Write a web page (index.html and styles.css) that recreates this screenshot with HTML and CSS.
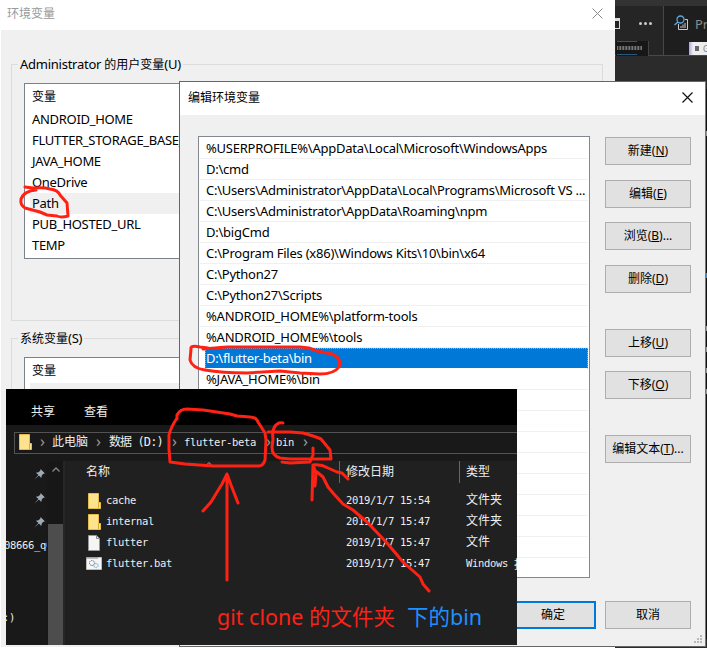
FILE: index.html
```html
<!DOCTYPE html>
<html lang="zh-CN">
<head>
<meta charset="utf-8">
<title>环境变量</title>
<link rel="stylesheet" href="styles.css">
</head>
<body>
<main class="desktop">
  <section class="editor">
    <div class="editor-top"></div>
    <div class="editor-tabs">
      <div class="tab-left"><i class="pane-icon"></i><span class="dots"><i></i><i></i><i></i></span></div>
      <div class="tab-right">
        <svg width="15" height="16" viewBox="0 0 15 16" fill="none"><path d="M4.500 9V14.500H13.500V4.500H11" stroke="#ccc"/><path d="M7 13V11M9 13V9.500M11 13V8" stroke="#ccc"/><circle cx="6.500" cy="4.500" r="3.500" stroke="#5ba7df" stroke-width="1.300"/><path d="M4 7L.5 10" stroke="#5ba7df" stroke-width="1.500"/></svg>
        <span>Pr</span>
      </div>
    </div>
    <div class="thumb-code"><i></i><i></i><i></i></div>
    <div class="thumb-page"><i></i><span>G</span></div>
    <div class="edge"><i></i><i></i><i></i><i></i><i></i><i></i></div>
  </section>

  <section class="win vars">
    <header class="bar"><span>环境变量</span><svg width="11" height="11" viewBox="0 0 11 11"><path d="M.5.5l10 10M10.500.5l-10 10" stroke="#888"/></svg></header>
    <div class="group">
      <span class="legend">Administrator <small>的用户变量</small>(U)</span>
      <div class="list">
        <div class="head">变量</div>
        <div>ANDROID_HOME</div><div>FLUTTER_STORAGE_BASE_URL</div><div>JAVA_HOME</div><div>OneDrive</div><div class="on">Path</div><div>PUB_HOSTED_URL</div><div>TEMP</div>
      </div>
    </div>
    <div class="group second">
      <span class="legend"><small>系统变量</small>(S)</span>
      <div class="list"><div class="head">变量</div><div class="on"></div></div>
    </div>
  </section>

  <section class="win edit">
    <header class="bar"><span>编辑环境变量</span><svg width="11" height="11" viewBox="0 0 11 11"><path d="M.5.5l10 10M10.500.5l-10 10" stroke="#111" stroke-width="1.200"/></svg></header>
    <div class="body">
      <div class="paths">
        <div>%USERPROFILE%\AppData\Local\Microsoft\WindowsApps</div>
        <div>D:\cmd</div>
        <div>C:\Users\Administrator\AppData\Local\Programs\Microsoft VS ...</div>
        <div>C:\Users\Administrator\AppData\Roaming\npm</div>
        <div>D:\bigCmd</div>
        <div>C:\Program Files (x86)\Windows Kits\10\bin\x64</div>
        <div>C:\Python27</div>
        <div>C:\Python27\Scripts</div>
        <div>%ANDROID_HOME%\platform-tools</div>
        <div>%ANDROID_HOME%\tools</div>
        <div class="sel">D:\flutter-beta\bin</div>
        <div>%JAVA_HOME%\bin</div>
        <div></div><div></div><div></div><div></div><div></div><div></div><div></div><div></div>
      </div>
      <div class="buttons">
        <button>新建(<u>N</u>)</button>
        <button class="g15">编辑(<u>E</u>)</button>
        <button class="g14">浏览(<u>B</u>)...</button>
        <button class="g15">删除(<u>D</u>)</button>
        <button class="g36">上移(<u>U</u>)</button>
        <button class="g14">下移(<u>O</u>)</button>
        <button class="g36">编辑文本(<u>T</u>)...</button>
      </div>
    </div>
    <footer><button class="ok">确定</button><button>取消</button></footer>
    <svg class="grip" width="9" height="9" viewBox="0 0 9 9" fill="#b8b8b8"><path d="M6 0h2v2h-2zM3 3h2v2h-2zM6 3h2v2h-2zM0 6h2v2h-2zM3 6h2v2h-2zM6 6h2v2h-2z"/></svg>
  </section>

  <section class="explorer">
    <nav class="menu"><span>共享</span><span>查看</span></nav>
    <div class="address"><div class="crumbs">
      <svg class="folder" width="14" height="16" viewBox="0 0 14 16"><path d="M.5.5h10v9h2v6H.5z" fill="#ffe28e" stroke="#e7bd49"/><path d="M10.500 10v5" stroke="#d9a936"/></svg>
      <b class="c1">›</b><span class="c2">此电脑</span><b class="c3">›</b><span class="c4">数据 (D:)</span><b class="c5">›</b><span class="c6">flutter-beta</span><b class="c7">›</b><span class="c8">bin</span><b class="c9">›</b>
    </div></div>
    <div class="panes">
      <aside class="side">
        <svg class="pin" viewBox="0 0 10 10"><path d="M6 0l4 4-1.500.3L7 6l-.4 2.200L4.500 6 .5 9.500 4 5.500 1.800 3.400 4 3l1.700-1.500z" fill="#9eaab5"/></svg>
        <svg class="pin" viewBox="0 0 10 10"><path d="M6 0l4 4-1.500.3L7 6l-.4 2.200L4.500 6 .5 9.500 4 5.500 1.800 3.400 4 3l1.700-1.500z" fill="#9eaab5"/></svg>
        <svg class="pin" viewBox="0 0 10 10"><path d="M6 0l4 4-1.500.3L7 6l-.4 2.200L4.500 6 .5 9.500 4 5.500 1.800 3.400 4 3l1.700-1.500z" fill="#9eaab5"/></svg>
        <span class="qq">08666_q0</span><span class="drv">:)</span>
      </aside>
      <div class="scroll"><svg width="8" height="5" viewBox="0 0 8 5" fill="none"><path d="M.5 4.500L4 1l3.500 3.500" stroke="#888" stroke-width="1.300"/></svg><i></i></div>
      <div class="files">
        <svg class="sort" width="6" height="4" viewBox="0 0 6 4" fill="none"><path d="M0 3.500L3 .5l3 3" stroke="#aaa"/></svg>
        <div class="row hd"><span>名称</span><span>修改日期</span><span>类型</span></div>
        <div class="row"><span><svg width="14" height="16" viewBox="0 0 14 16"><path d="M.5.5h10v9h2v6H.5z" fill="#ffe28e" stroke="#e7bd49"/><path d="M10.500 10v5" stroke="#d9a936"/></svg>cache</span><span>2019/1/7 15:54</span><span class="cj">文件夹</span></div>
        <div class="row"><span><svg width="14" height="16" viewBox="0 0 14 16"><path d="M.5.5h10v9h2v6H.5z" fill="#ffe28e" stroke="#e7bd49"/><path d="M10.500 10v5" stroke="#d9a936"/></svg>internal</span><span>2019/1/7 15:47</span><span class="cj">文件夹</span></div>
        <div class="row"><span><svg width="14" height="16" viewBox="0 0 14 16"><path d="M.5.500h8l3 3v12H.5z" fill="#f5f5f5" stroke="#999"/><path d="M8.500.5v3h3" fill="none" stroke="#888"/></svg>flutter</span><span>2019/1/7 15:47</span><span class="cj">文件</span></div>
        <div class="row"><span><svg class="bat" width="16" height="13" viewBox="0 0 16 13"><path d="M.5.5h15v12H.5z" fill="#f4f6f7" stroke="#bbb"/><path d="M0 1h12" stroke="#888"/><circle cx="6" cy="6" r="2.500" fill="none" stroke="#777" stroke-dasharray="1.500 .6"/><circle cx="10" cy="8.500" r="2.200" fill="#e2f2fa" stroke="#76a8c1" stroke-dasharray="1.500 .6"/></svg>flutter.bat</span><span>2019/1/7 15:47</span><span>Windows <em>批</em></span></div>
        <p class="note"><span class="red">git clone 的文件夹</span><span class="blue">下的bin</span></p>
      </div>
    </div>
  </section>

  <svg class="ink" width="707" height="648" viewBox="0 0 707 648">
    <path d="M25 187L33 188Q44 187 50 189Q58 190 60 195L67 203L68 216Q61 218 57 216L47 215L40 212L25 208Q20 205 21 199Q24 191 36 190"/>
    <path d="M208 348L200 347Q190 345 191 349L190 360Q192 368 205 370Q222 373 247 373L280 371L300 373L320 374Q334 374 339 367Q342 358 332 354L317 351L309 348L300 347H263H227L203 349"/>
    <path d="M177 419V415Q180 409 187 409L203 410L210 411L230 414L237 416L250 417Q256 417 258 422L265 433L266 440L265 460Q263 466 259 466H213L185 464L170 462L169 449V435Q171 427 177 418"/>
    <path d="M283 423Q277 422 274 428Q272 432 273 439L272 447Q272 456 280 458L290 459H331L330 450L321 439Q314 436 303 433L290 432H268"/>
    <path d="M282 462L290 463L310 462L313 455V448"/>
    <path d="M203 511L211 502L222 484L227 474V580M227 474L231 485L238 503"/>
    <path d="M312 500L313 465L316 473L315 486M313 465Q321 464 328 468L337 472L342 473L348 479M317 472L323 477L328 487L333 493L343 504L353 510L367 522L387 543L403 562L420 577L423 584L429 591"/>
  </svg>
</main>
</body>
</html>
```

FILE: styles.css
```css
* { box-sizing: border-box; }
body { margin: 0; }
.desktop { position: relative; width: 707px; height: 648px; overflow: hidden; background: #fff; font: 13px/21px "Noto Sans", "Noto Sans CJK SC", sans-serif; color: #000; }

.editor { position: absolute; left: 615px; top: 0; width: 92px; height: 648px; background: #2b2b2b; }
.editor-top { height: 6px; background: #333; }
.editor-tabs { display: flex; height: 50px; border-bottom: 1px solid #484848; background: #1e1e1e; }
.tab-left { width: 49px; border-right: 1px solid #484848; display: flex; align-items: center; background: #252526; }
.editor-tabs .tab-left { height: 49px; padding-bottom: 14px; }
.pane-icon { width: 5px; height: 11px; border: 1px solid #ddd; border-top-width: 3px; border-left: 0; }
.dots { display: flex; gap: 2px; margin-left: 19px; }
.dots i { width: 3px; height: 3px; background: #ccc; border-radius: 50%; }
.tab-right { display: flex; gap: 6px; padding: 9px 0 0 10px; color: #8c8c8c; overflow: hidden; flex: 1; }
.tab-right svg { flex: none; }
.tab-right span { font-size: 13px; line-height: 19px; }
.thumb-code { position: absolute; left: 1px; top: 41px; width: 33px; height: 15px; border-right: 1px solid #444; background: #171717; }
.thumb-code i { display: block; height: 1px; width: 20px; margin: 0 0 4px 1px; background: #235b7c; }
.thumb-code i:nth-child(2) { height: 4px; width: 25px; margin-bottom: 4px; background: repeating-linear-gradient(90deg, #777 0 1px, #333 1px 2px, #555 2px 3px); }
.thumb-page { position: absolute; left: 74px; top: 42px; width: 18px; height: 13px; padding: 2px 0 0 6px; display: flex; gap: 4px; background: linear-gradient(90deg, #a8a2e8, #eee 4px); color: #777; font-size: 8px; line-height: 9px; overflow: hidden; }
.thumb-page i { width: 4px; height: 5px; margin-top: 2px; background: #666; flex: none; }
.edge { position: absolute; left: 91px; top: 89px; width: 1px; height: 550px; background: #111; padding-top: 42px; }
.edge i { display: block; height: 5px; margin-bottom: 16px; background: #999; }
.edge i:nth-child(2) { margin: 137px 0 48px; background: #3b8ed0; }

.win { position: absolute; background: #f0f0f0; }
.bar { display: flex; justify-content: space-between; background: #fff; font-size: 12px; }
.vars { left: 1px; top: 0; width: 614px; height: 648px; border-bottom: 1px solid #fff; }
.vars .bar { height: 30px; padding: 3px 12px 0 6px; color: #999; }
.vars .bar svg { margin-top: 5px; }
.group { position: relative; width: 592px; height: 257px; margin: 34px 0 0 10px; border: 1px solid #dcdcdc; padding: 18px 0 0 12px; }
.second { margin-top: 17px; }
.legend { position: absolute; left: 6px; top: -11px; padding: 0 2px; background: #f0f0f0; line-height: 21px; white-space: nowrap; letter-spacing: -.25px; }
.legend small { font-size: 12px; letter-spacing: 0; }
.list { width: 300px; height: 176px; border: 1px solid #7a828c; background: #fff; padding-left: 5px; }
.list div { height: 21px; line-height: 20px; padding-left: 2px; white-space: nowrap; letter-spacing: -.3px; }
.list .head { height: 25px; line-height: 26px; font-size: 12px; letter-spacing: 0; }
.list .on { background: #f0f0f0; }

.edit { left: 179px; top: 81px; width: 527px; height: 566px; border: 1px solid #666; border-right-color: #777; }
.edit .bar { height: 33px; padding: 5px 12px 0 8px; }
.edit .bar svg { margin-top: 5px; }
.body { display: flex; gap: 15px; padding: 21px 0 0 18px; }
.paths { width: 392px; height: 442px; border: 1px solid #828790; background: #fff; padding: 1px 1px 0; letter-spacing: -.235px; }
.paths div { height: 21px; padding-left: 6px; line-height: 21px; border-bottom: 1px solid #f0f0f0; white-space: nowrap; }
.paths .sel { margin-left: 5px; color: #fff; background: #0078d7; border: 1px dotted #e99a50; border-bottom: 1px solid #fff; line-height: 19px; padding-left: 0; letter-spacing: -.3px; }
.buttons { padding-top: 1px; display: flex; flex-direction: column; }
button { width: 86px; height: 28px; padding: 0 0 1px; border: 1px solid #adadad; background: #e1e1e1; color: #000; font: 12px/24px "Noto Sans", "Noto Sans CJK SC", sans-serif; white-space: nowrap; }
.g15 { margin-top: 15px; }
.g14 { margin-top: 14px; }
.g36 { margin-top: 36px; }
footer { display: flex; gap: 9px; justify-content: flex-end; padding: 23px 14px 0 0; }
.ok { border: 2px solid #0078d7; }
.grip { position: absolute; right: 2px; bottom: 2px; }

.explorer { position: absolute; left: 6px; top: 389px; width: 511px; height: 256px; overflow: hidden; background: #202020; color: #eee; font: 10.5px/21px "DejaVu Sans Mono", "Noto Sans CJK SC", monospace; letter-spacing: -.32px; }
.menu { height: 36px; background: #000; padding: 11px 0 0 25px; display: flex; gap: 29px; font: 12px/21px "Noto Sans CJK SC", sans-serif; letter-spacing: 0; }
.address { height: 36px; background: #191919; padding: 7px 0 0 8px; }
.crumbs { display: flex; align-items: center; height: 22px; border: 1px solid #535353; border-right: 0; padding-left: 4px; padding-bottom: 2px; white-space: nowrap; }
.crumbs > * { flex: none; }
.crumbs b { font: 16px/16px "Noto Sans", sans-serif; color: #999; width: 6px; padding-bottom: 2px; }
.crumbs .c2, .crumbs .c4 { font-size: 12px; letter-spacing: 0; }
.c1 { margin-left: 7px; }
.c2 { margin-left: 6px; width: 36px; }
.c3 { margin-left: 8px; }
.crumbs .c4 { margin-left: 7px; width: 56px; letter-spacing: -.9px; }
.c5 { margin-left: 7px; }
.c6 { margin-left: 6px; width: 72px; }
.c7 { margin-left: 10px; }
.c8 { margin-left: 4px; width: 20px; }
.c9 { margin-left: 7px; }
.panes { display: flex; height: 184px; }
.side { width: 41px; background: #191919; overflow: hidden; padding: 8px 0 0 28px; }
.pin { display: block; width: 11px; height: 11px; margin-bottom: 13px; }
.side span { display: block; margin-left: -30px; white-space: nowrap; }
.qq { margin-top: -6px; }
.drv { margin-top: 51px; }
.side .drv { margin-left: -31px; }
.scroll { width: 16px; background: #171717; padding: 6px 0 0 5px; }
.scroll svg { display: block; }
.scroll i { display: block; width: 15px; height: 122px; margin: 52px 0 0 -4px; background: #4d4d4d; }
.files { position: relative; flex: 1; border-left: 2px solid #272727; padding-left: 21px; overflow: hidden; }
.sort { position: absolute; left: 141px; top: 1px; }
.row { display: grid; grid-template-columns: 260px 120px 120px; height: 21px; line-height: 21px; white-space: nowrap; }
.row span { display: flex; align-items: center; }
.row svg { margin: 0 4px 0 2px; width: 14px; }
.row .bat { margin: 0 4px 0 0; width: 16px; }
.row em { font: 12px/21px "Noto Sans CJK SC"; margin-left: 6px; }
.row .cj { font-size: 12px; letter-spacing: 0; }
.hd { height: 22px; font-size: 12px; margin-bottom: 7px; letter-spacing: 0; }
.hd span + span { border-left: 1px solid #666; margin-left: -7px; padding-left: 6px; }
.note { display: flex; margin: 29px 0 0 131px; font: 21.5px/28px "Noto Sans", "Noto Sans CJK SC", sans-serif; letter-spacing: 0; white-space: nowrap; }
.red { color: #fa2317; width: 190px; }
.blue { color: #1e90ff; }
.ink { position: absolute; left: 0; top: 0; fill: none; stroke: #ff2114; stroke-width: 3; stroke-linecap: round; stroke-linejoin: round; }
```
